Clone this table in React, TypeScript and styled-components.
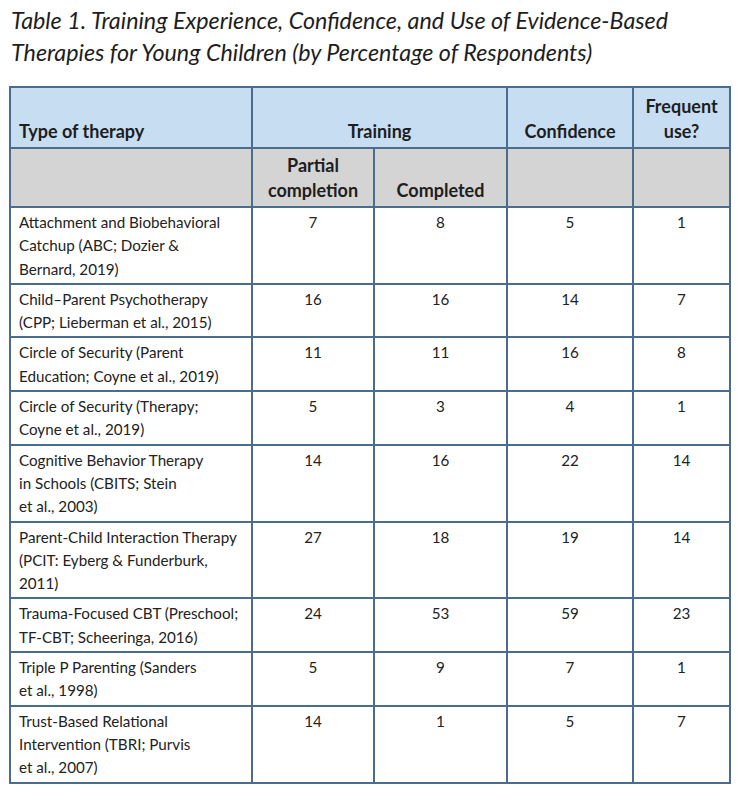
import React from "react";
import styled, { createGlobalStyle } from "styled-components";

const GlobalStyle = createGlobalStyle`
  html, body { margin: 0; padding: 0; background: #ffffff; }
  body { font-family: Lato, "Noto Sans", sans-serif; color: #1e1e1e; }
`;

const Page = styled.div`
  width: 750px;
  padding: 4px 0 0 9px;
  box-sizing: border-box;
`;

const Title = styled.h1`
  margin: 0 0 18px 2px;
  font-family: Lato, "Noto Sans", sans-serif;
  font-style: italic;
  font-weight: 400;
  font-size: 23.3px;
  line-height: 32px;
  color: #1e1e1e;
`;

const Table = styled.table`
  width: 722px;
  table-layout: fixed;
  border-collapse: collapse;
  border: 2px solid #4a6d8d;
  font-family: Lato, "Noto Sans", sans-serif;
`;

const HeadRow = styled.tr<{ $tone: "blue" | "grey" }>`
  background: ${(p) => (p.$tone === "blue" ? "#c7ddf1" : "#d4d4d4")};
`;

const HeadCell = styled.th<{ $align?: "left" | "center"; $h?: number }>`
  border: 2px solid #4a6d8d;
  padding: 0 8px 3px;
  vertical-align: bottom;
  text-align: ${(p) => p.$align ?? "center"};
  font-weight: 700;
  font-size: 18px;
  line-height: 25px;
  color: #1e1e1e;
  height: ${(p) => (p.$h ? `${p.$h}px` : "auto")};
  box-sizing: border-box;
`;

const NameCell = styled.td`
  border: 2px solid #4a6d8d;
  padding: 3px 8px 2px;
  vertical-align: top;
  text-align: left;
  font-size: 15.2px;
  line-height: 23.3px;
  color: #222;
`;

const NumCell = styled.td`
  border: 2px solid #4a6d8d;
  padding: 3px 8px 2px;
  vertical-align: top;
  text-align: center;
  font-size: 15.2px;
  line-height: 23.3px;
  color: #222;
`;

type Row = { name: React.ReactNode; v: [number, number, number, number] };

const rows: Row[] = [
  { name: <>Attachment and Biobehavioral<br />Catchup (ABC; Dozier &amp;<br />Bernard, 2019)</>, v: [7, 8, 5, 1] },
  { name: <>Child–Parent Psychotherapy<br />(CPP; Lieberman et al., 2015)</>, v: [16, 16, 14, 7] },
  { name: <>Circle of Security (Parent<br />Education; Coyne et al., 2019)</>, v: [11, 11, 16, 8] },
  { name: <>Circle of Security (Therapy;<br />Coyne et al., 2019)</>, v: [5, 3, 4, 1] },
  { name: <>Cognitive Behavior Therapy<br />in Schools (CBITS; Stein<br />et al., 2003)</>, v: [14, 16, 22, 14] },
  { name: <>Parent-Child Interaction Therapy<br />(PCIT: Eyberg &amp; Funderburk,<br />2011)</>, v: [27, 18, 19, 14] },
  { name: <>Trauma-Focused CBT (Preschool;<br />TF-CBT; Scheeringa, 2016)</>, v: [24, 53, 59, 23] },
  { name: <>Triple P Parenting (Sanders<br />et al., 1998)</>, v: [5, 9, 7, 1] },
  { name: <>Trust-Based Relational<br />Intervention (TBRI; Purvis<br />et al., 2007)</>, v: [14, 1, 5, 7] },
];

export default function App() {
  return (
    <Page>
      <GlobalStyle />
      <Title>
        Table 1. Training Experience, Confidence, and Use of Evidence-Based
        <br />
        Therapies for Young Children (by Percentage of Respondents)
      </Title>
      <Table>
        <colgroup>
          <col style={{ width: 242 }} />
          <col style={{ width: 122 }} />
          <col style={{ width: 133 }} />
          <col style={{ width: 126 }} />
          <col style={{ width: 97 }} />
        </colgroup>
        <thead>
          <HeadRow $tone="blue">
            <HeadCell $align="left" $h={61}>Type of therapy</HeadCell>
            <HeadCell colSpan={2}>Training</HeadCell>
            <HeadCell>Confidence</HeadCell>
            <HeadCell>Frequent<br />use?</HeadCell>
          </HeadRow>
          <HeadRow $tone="grey">
            <HeadCell $h={59} />
            <HeadCell>Partial<br />completion</HeadCell>
            <HeadCell>Completed</HeadCell>
            <HeadCell />
            <HeadCell />
          </HeadRow>
        </thead>
        <tbody>
          {rows.map((r, i) => (
            <tr key={i}>
              <NameCell>{r.name}</NameCell>
              {r.v.map((n, j) => (
                <NumCell key={j}>{n}</NumCell>
              ))}
            </tr>
          ))}
        </tbody>
      </Table>
    </Page>
  );
}
